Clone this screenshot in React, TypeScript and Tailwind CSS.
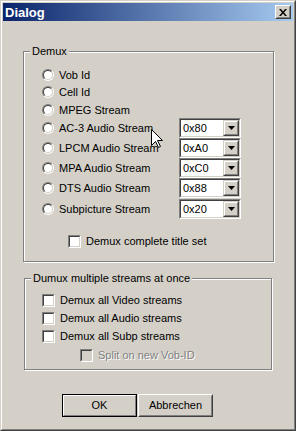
import React from "react";

const FONT = "font-['Liberation_Sans',Arial,sans-serif]";

function Radio() {
  return (
    <div className="w-[12px] h-[12px] rounded-full border border-t-[#808080] border-l-[#808080] border-r-white border-b-white shrink-0">
      <div className="w-full h-full rounded-full border border-t-[#404040] border-l-[#404040] border-r-[#d4d0c8] border-b-[#d4d0c8] bg-white" />
    </div>
  );
}

function Check({ disabled = false }: { disabled?: boolean }) {
  return (
    <div className="w-[13px] h-[13px] border border-t-[#808080] border-l-[#808080] border-r-white border-b-white shrink-0">
      <div
        className={
          "w-full h-full border border-t-[#404040] border-l-[#404040] border-r-[#d4d0c8] border-b-[#d4d0c8] " +
          (disabled ? "bg-[#d4d0c8]" : "bg-white")
        }
      />
    </div>
  );
}

function Combo({ value }: { value: string }) {
  return (
    <div className="w-[62px] h-[20px] border border-t-[#808080] border-l-[#808080] border-r-white border-b-white shrink-0">
      <div className="w-full h-full border border-t-[#404040] border-l-[#404040] border-r-[#d4d0c8] border-b-[#d4d0c8] bg-white flex items-center">
        <span className="pl-[2px] flex-1 leading-none">{value}</span>
        <div className="w-[16px] h-[16px] border border-t-[#d4d0c8] border-l-[#d4d0c8] border-r-[#404040] border-b-[#404040]">
          <div className="w-full h-full border border-t-white border-l-white border-r-[#808080] border-b-[#808080] bg-[#d4d0c8] flex items-center justify-center">
            <svg width="7" height="4" viewBox="0 0 7 4">
              <path d="M0 0h7L3.5 4z" fill="#000" />
            </svg>
          </div>
        </div>
      </div>
    </div>
  );
}

function RadioRow({ label, h, mt, combo }: { label: string; h: number; mt: number; combo?: string }) {
  return (
    <div className="flex items-center" style={{ height: h, marginTop: mt }}>
      <div className="w-[137px] flex items-center gap-[5px]">
        <Radio />
        <span className="leading-none whitespace-nowrap">{label}</span>
      </div>
      {combo && <Combo value={combo} />}
    </div>
  );
}

function CheckRow({ label, mt, disabled = false, indent = 0 }: { label: string; mt: number; disabled?: boolean; indent?: number }) {
  return (
    <div className="flex items-center gap-[5px] h-[13px]" style={{ marginTop: mt, marginLeft: indent }}>
      <Check disabled={disabled} />
      <span
        className={
          "leading-none whitespace-nowrap " +
          (disabled ? "text-[#808080] [text-shadow:1px_1px_0_#ffffff]" : "")
        }
      >
        {label}
      </span>
    </div>
  );
}

function Group({ label, className, children }: { label: string; className: string; children: React.ReactNode }) {
  return (
    <div className={"relative border border-[#808080] shadow-[1px_1px_0_#ffffff,inset_1px_1px_0_#ffffff] " + className}>
      <div className="absolute left-[6px] -top-[7px] px-[2px] bg-[#d4d0c8] leading-[13px] whitespace-nowrap">
        {label}
      </div>
      {children}
    </div>
  );
}

export default function App() {
  return (
    <div
      className={
        "relative w-[296px] h-[431px] bg-[#d4d0c8] border border-t-[#d4d0c8] border-l-[#d4d0c8] border-r-[#404040] border-b-[#404040] text-[11px] text-black " +
        FONT
      }
    >
      <div className="h-full border border-t-white border-l-white border-r-[#808080] border-b-[#808080] p-px flex flex-col">
        {/* Title bar */}
        <div className="h-[18px] flex items-center bg-[linear-gradient(to_right,#0a246a,#a6caf0)] shrink-0">
          <span className="pl-[2px] text-white font-bold text-[13px] leading-none flex-1">Dialog</span>
          <div className="w-[16px] h-[14px] mr-[2px] border border-t-white border-l-white border-r-[#404040] border-b-[#404040]">
            <div className="w-full h-full border border-t-[#d4d0c8] border-l-[#d4d0c8] border-r-[#808080] border-b-[#808080] bg-[#d4d0c8] flex items-center justify-center">
              <svg width="8" height="7" viewBox="0 0 8 7">
                <path d="M0 0h2l2 2.5L6 0h2L5 3.5 8 7H6L4 4.5 2 7H0l3-3.5z" fill="#000" />
              </svg>
            </div>
          </div>
        </div>

        {/* Demux group */}
        <Group label="Demux" className="ml-[20px] mt-[30px] w-[251px] h-[211px] shrink-0">
          <div className="pl-[18px] flex flex-col">
            <RadioRow label="Vob Id" h={16} mt={15} />
            <RadioRow label="Cell Id" h={16} mt={1} />
            <RadioRow label="MPEG Stream" h={16} mt={2} />
            <RadioRow label="AC-3 Audio Stream" h={20} mt={0} combo="0x80" />
            <RadioRow label="LPCM Audio Stream" h={20} mt={0} combo="0xA0" />
            <RadioRow label="MPA Audio Stream" h={20} mt={0} combo="0xC0" />
            <RadioRow label="DTS Audio Stream" h={20} mt={0} combo="0x88" />
            <RadioRow label="Subpicture Stream" h={20} mt={1} combo="0x20" />
            <CheckRow label="Demux complete title set" mt={16} indent={26} />
          </div>
        </Group>

        {/* Multiple streams group */}
        <Group label="Dumux multiple streams at once" className="ml-[21px] mt-[16px] w-[248px] h-[92px] shrink-0">
          <div className="pl-[17px] flex flex-col">
            <CheckRow label="Demux all Video streams" mt={15} />
            <CheckRow label="Demux all Audio streams" mt={5} />
            <CheckRow label="Demux all Subp streams" mt={5} />
            <CheckRow label="Split on new Vob-ID" mt={6} indent={38} disabled />
          </div>
        </Group>

        {/* Buttons */}
        <div className="flex ml-[59px] mt-[24px] gap-[1px]">
          <div className="w-[75px] h-[23px] border border-black">
            <div className="w-full h-full border border-t-white border-l-white border-r-[#808080] border-b-[#808080] flex items-center justify-center leading-none">
              OK
            </div>
          </div>
          <div className="w-[75px] h-[23px] border border-t-white border-l-white border-r-[#404040] border-b-[#404040]">
            <div className="w-full h-full border border-t-[#d4d0c8] border-l-[#d4d0c8] border-r-[#808080] border-b-[#808080] flex items-center justify-center leading-none">
              Abbrechen
            </div>
          </div>
        </div>
      </div>

      {/* Mouse cursor */}
      <svg className="absolute left-[150px] top-[128px]" width="13" height="20" viewBox="0 0 13 20">
        <path d="M0.5 0.5V16.5L4.5 12.5L7.5 18.5L9.5 17.5L6.5 11.5H11.5Z" fill="#fff" stroke="#000" strokeWidth="1" />
      </svg>
    </div>
  );
}
